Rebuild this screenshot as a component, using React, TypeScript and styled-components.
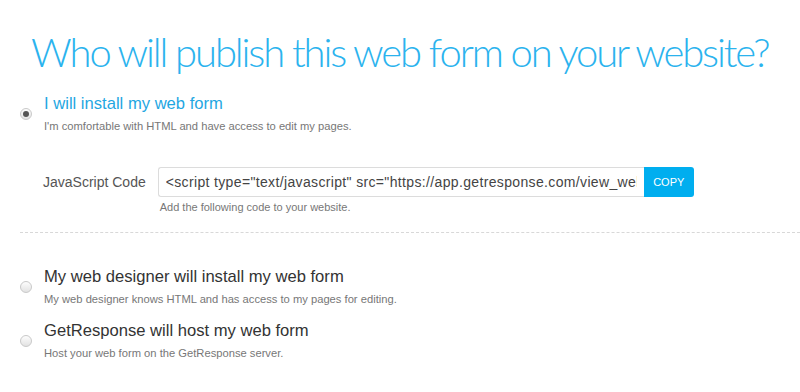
import React, { ReactElement, useState } from 'react';
import styled, { createGlobalStyle } from 'styled-components';

const GlobalStyle = createGlobalStyle`
    html, body {
        margin: 0;
        padding: 0;
        background: #fff;
    }
    body {
        font-family: 'Liberation Sans', Arial, sans-serif;
    }
`;

const Page = styled.div`
    width: 800px;
    height: 392px;
    overflow: hidden;
    box-sizing: border-box;
    padding-top: 28px;
`;

const Title = styled.h1`
    margin: 0 0 17px 0;
    padding-left: 31px;
    font-family: Lato, Roboto, 'Liberation Sans', sans-serif;
    font-weight: 300;
    font-size: 40px;
    line-height: 48px;
    letter-spacing: -2.1px;
    color: #2bb3ee;
    white-space: nowrap;
`;

const Option = styled.label`
    display: flex;
    align-items: center;
    padding-left: 20px;
    cursor: pointer;
`;

const Radio = styled.span<{ checked?: boolean }>`
    flex: none;
    position: relative;
    width: 10px;
    height: 10px;
    margin-right: 12px;
    border-radius: 50%;
    border: 1px solid #c9c9c9;
    background: linear-gradient(#fdfdfd, #e2e2e2);

    &::after {
        content: '';
        display: ${props => props.checked ? 'block' : 'none'};
        position: absolute;
        left: 2px;
        top: 2px;
        width: 6px;
        height: 6px;
        border-radius: 50%;
        background: #555;
    }
`;

const OptionText = styled.div`
    display: flex;
    flex-direction: column;
`;

const OptionTitle = styled.span<{ active?: boolean }>`
    font-size: 16.6px;
    line-height: 22px;
    color: ${props => props.active ? '#1fa7e2' : '#333'};
`;

const OptionHint = styled.span`
    margin-top: 3px;
    font-size: 11.2px;
    line-height: 16px;
    color: #777;
`;

const CodeRow = styled.div`
    display: flex;
    align-items: flex-start;
    margin-top: 33px;
    padding-left: 43px;
`;

const CodeLabel = styled.span`
    font-size: 14px;
    line-height: 30px;
    color: #555;
    margin-right: 12px;
`;

const CodeField = styled.div`
    display: flex;
    flex-direction: column;
`;

const InputGroup = styled.div`
    display: flex;
    height: 30px;
`;

const CodeInput = styled.input`
    width: 486px;
    height: 30px;
    box-sizing: border-box;
    padding: 0 7px;
    border: 1px solid #dcdcdc;
    border-right: none;
    border-radius: 3px 0 0 3px;
    font-family: 'Liberation Sans', Arial, sans-serif;
    font-size: 14px;
    letter-spacing: 0.35px;
    color: #444;
    outline: none;
`;

const CopyButton = styled.button`
    width: 50px;
    height: 30px;
    border: none;
    border-radius: 0 3px 3px 0;
    background: #00aeef;
    color: #fff;
    font-family: 'Liberation Sans', Arial, sans-serif;
    font-size: 11px;
    cursor: pointer;
`;

const FieldHint = styled.span`
    margin-top: 3px;
    padding-left: 2px;
    font-size: 11px;
    line-height: 14px;
    color: #777;
`;

const Divider = styled.hr`
    margin: 18px 0 33px 20px;
    border: none;
    border-top: 1px dashed #d8d8d8;
`;

const OtherOptions = styled.div`
    display: flex;
    flex-direction: column;
    gap: 13px;
`;

const CODE = '<script type="text/javascript" src="https://app.getresponse.com/view_webform_v2.js?u=S&webforms_id=1234"></script>';

export default function App(): ReactElement {
    const [choice, setChoice] = useState(0);

    return (
        <Page>
            <GlobalStyle />
            <Title>Who will publish this web form on your website?</Title>

            <Option onClick={() => setChoice(0)}>
                <Radio checked={choice === 0} />
                <OptionText>
                    <OptionTitle active>I will install my web form</OptionTitle>
                    <OptionHint>I'm comfortable with HTML and have access to edit my pages.</OptionHint>
                </OptionText>
            </Option>

            <CodeRow>
                <CodeLabel>JavaScript Code</CodeLabel>
                <CodeField>
                    <InputGroup>
                        <CodeInput readOnly value={CODE} />
                        <CopyButton>COPY</CopyButton>
                    </InputGroup>
                    <FieldHint>Add the following code to your website.</FieldHint>
                </CodeField>
            </CodeRow>

            <Divider />

            <OtherOptions>
                <Option onClick={() => setChoice(1)}>
                    <Radio checked={choice === 1} />
                    <OptionText>
                        <OptionTitle>My web designer will install my web form</OptionTitle>
                        <OptionHint>My web designer knows HTML and has access to my pages for editing.</OptionHint>
                    </OptionText>
                </Option>
                <Option onClick={() => setChoice(2)}>
                    <Radio checked={choice === 2} />
                    <OptionText>
                        <OptionTitle>GetResponse will host my web form</OptionTitle>
                        <OptionHint>Host your web form on the GetResponse server.</OptionHint>
                    </OptionText>
                </Option>
            </OtherOptions>
        </Page>
    );
}
